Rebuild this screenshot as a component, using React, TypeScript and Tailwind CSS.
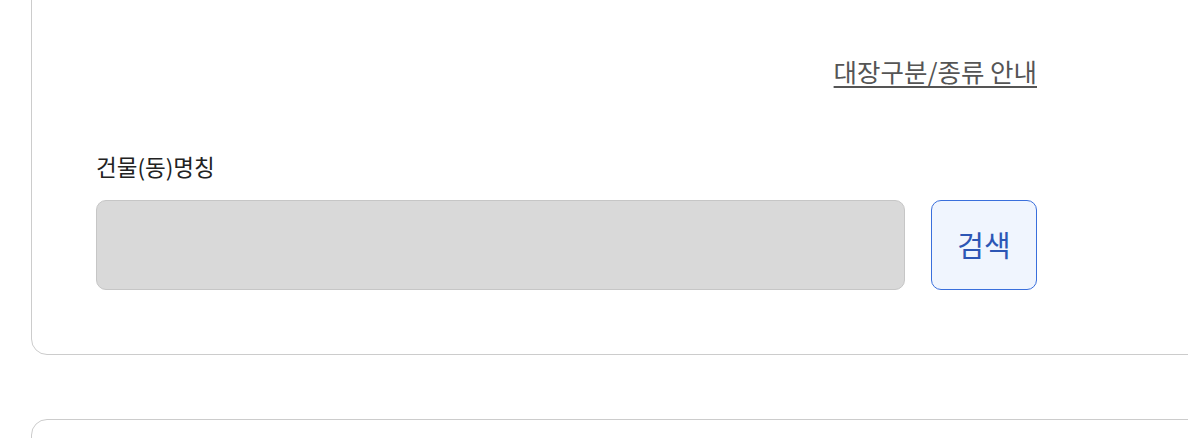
export default function App() {
  return (
    <div className="w-[1188px] h-[438px] overflow-hidden bg-white font-['Noto_Sans_CJK_KR','Noto_Sans',sans-serif]">
      <div className="ml-[31px] -mt-[42px] w-[1200px] rounded-[16px] border border-[#cccccc] bg-white pt-[94px] pb-[64px] pl-[64px]">
        <div className="w-[941px]">
          <div className="flex justify-end">
            <a href="#" className="text-[25.5px] leading-[36px] text-[#555555] underline underline-offset-[4px] decoration-[2px]">
              대장구분/종류 안내
            </a>
          </div>
          <div className="mt-[62px] text-[22.5px] leading-[30px] text-[#222222]">건물(동)명칭</div>
          <div className="mt-[19px] flex gap-[26px]">
            <input
              type="text"
              disabled
              className="h-[90px] flex-1 rounded-[10px] border border-[#c6c6c6] bg-[#d9d9d9] px-4"
            />
            <button className="h-[90px] w-[106px] rounded-[10px] border border-[#3a6fdc] bg-[#f0f5fe] text-[29px] text-[#2c56b5]">
              검색
            </button>
          </div>
        </div>
      </div>
      <div className="ml-[31px] mt-[64px] h-[100px] w-[1200px] rounded-[16px] border border-[#cccccc] bg-white" />
    </div>
  );
}
